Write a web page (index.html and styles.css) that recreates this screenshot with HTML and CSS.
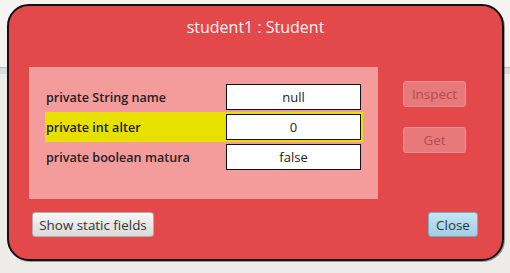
FILE: index.html
```html
<!DOCTYPE html>
<html lang="en">
  <head>
    <meta charset="UTF-8" />
    <title>student1 : Student</title>
    <link rel="stylesheet" href="styles.css">
  </head>
  <body>
    <div class="inspector">
      <div class="title">student1 : Student</div>

      <div class="middle">
        <!-- object fields -->
        <div class="fields">
          <div class="field-row">
            <span class="field-name">private String name</span>
            <span class="field-value">null</span>
          </div>
          <div class="field-row selected">
            <span class="field-name">private int alter</span>
            <span class="field-value">0</span>
          </div>
          <div class="field-row">
            <span class="field-name">private boolean matura</span>
            <span class="field-value">false</span>
          </div>
        </div>

        <div class="side-buttons">
          <button class="btn btn-disabled" disabled>Inspect</button>
          <button class="btn btn-disabled" disabled>Get</button>
        </div>
      </div>

      <div class="bottom">
        <button class="btn btn-grey">Show static fields</button>
        <button class="btn btn-blue">Close</button>
      </div>
    </div>
  </body>
</html>
```

FILE: styles.css
```css
:root {
  --red: #e3484b;
  --pink: #f49c9c;
  --yellow: #e8e000;
  --text-color: #222;
}

* {
  margin: 0;
  padding: 0;
  box-sizing: border-box;
}

html,
body {
  height: 100%;
  overflow: hidden;
}

body {
  font-family: "Open Sans", "Noto Sans", sans-serif;
  background: linear-gradient(
    to bottom,
    #f5f4f1 0,
    #f5f4f1 67px,
    #b9b9b9 67px,
    #b9b9b9 68px,
    #dcdcdc 68px,
    #dcdcdc 74px,
    #edece8 74px
  );
  padding: 4px 0 0 7px;
}

.inspector {
  width: 497px;
  height: 257px;
  background-color: var(--red);
  border: 2px solid #111;
  border-radius: 22px;
  box-shadow: 1px 1px 0 rgba(0, 0, 0, 0.35);
  display: flex;
  flex-direction: column;
}

.title {
  color: #fff4f4;
  font-size: 16px;
  line-height: 20px;
  text-align: center;
  padding-top: 11px;
  margin-bottom: 30px;
}

.middle {
  display: flex;
  padding-left: 20px;
}

/* Fields panel */
.fields {
  width: 349px;
  height: 132px;
  background-color: var(--pink);
  padding: 15px 0 0 16px;
}

.field-row {
  width: 318px;
  height: 30px;
  display: flex;
  align-items: center;
  padding: 0 2px 0 1px;
}

.field-row.selected {
  background-color: var(--yellow);
}

.field-name {
  flex: 1;
  font-size: 12.6px;
  font-weight: 600;
  color: var(--text-color);
}

.field-value {
  width: 135px;
  height: 26px;
  background: #fff;
  border: 1px solid #111;
  font-size: 13px;
  line-height: 24px;
  text-align: center;
  color: var(--text-color);
}

.side-buttons {
  display: flex;
  flex-direction: column;
  gap: 20px;
  padding: 14px 0 0 25px;
}

.btn {
  font-family: inherit;
  font-size: 13.4px;
  height: 26px;
  border-radius: 3px;
  cursor: pointer;
}

.btn-disabled {
  width: 63px;
  background-color: #e7797a;
  border: 1px solid #ee9090;
  color: #b24c4e;
  cursor: default;
}

.bottom {
  display: flex;
  justify-content: space-between;
  margin-top: 13px;
  padding: 0 24px 0 23px;
}

.bottom .btn {
  height: 25px;
}

.btn-grey {
  width: 122px;
  background: linear-gradient(#f6f6f6, #dadada);
  border: 1px solid #adadad;
  color: #333;
}

.btn-blue {
  width: 50px;
  background: linear-gradient(#c4e5f4, #a0cee5);
  border: 1px solid #7aa8c0;
  color: #333;
}
```
